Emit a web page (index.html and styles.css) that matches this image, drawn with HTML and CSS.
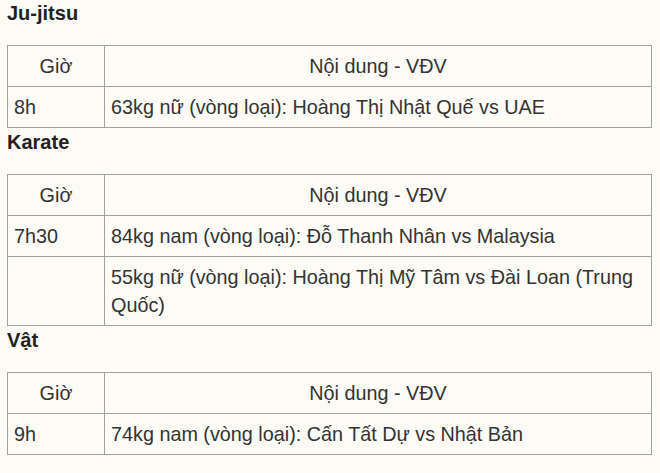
FILE: index.html
```html
<!DOCTYPE html>
<html lang="vi">
<head>
<meta charset="utf-8">
<link rel="stylesheet" href="styles.css">
</head>
<body>
<div class="page">
  <p class="sport">Ju-jitsu</p>
  <table class="sched">
    <tr><td class="c1 hd">Giờ</td><td class="c2 hd">Nội dung - VĐV</td></tr>
    <tr><td class="c1">8h</td><td class="c2">63kg nữ (vòng loại): Hoàng Thị Nhật Quế vs UAE</td></tr>
  </table>
  <p class="sport">Karate</p>
  <table class="sched">
    <tr><td class="c1 hd">Giờ</td><td class="c2 hd">Nội dung - VĐV</td></tr>
    <tr><td class="c1">7h30</td><td class="c2">84kg nam (vòng loại): Đỗ Thanh Nhân vs Malaysia</td></tr>
    <tr><td class="c1"></td><td class="c2">55kg nữ (vòng loại): Hoàng Thị Mỹ Tâm vs Đài Loan (Trung Quốc)</td></tr>
  </table>
  <p class="sport">Vật</p>
  <table class="sched">
    <tr><td class="c1 hd">Giờ</td><td class="c2 hd">Nội dung - VĐV</td></tr>
    <tr><td class="c1">9h</td><td class="c2">74kg nam (vòng loại): Cấn Tất Dự vs Nhật Bản</td></tr>
  </table>
</div>
</body>
</html>
```
FILE: styles.css
```css
html, body {
  margin: 0;
  padding: 0;
  background: #fcfbf6;
}
body {
  font-family: "Liberation Sans", Arial, sans-serif;
  color: #333;
  font-size: 19.8px;
}
.page {
  padding: 0 8px 0 7px;
}
.sport {
  font-weight: bold;
  font-size: 20px;
  line-height: 26px;
  margin: 1px 0 19px;
  color: #222;
}
.sport:first-child {
  margin-top: 0;
}
.sched {
  width: 100%;
  border-collapse: collapse;
  table-layout: fixed;
}
.sched td {
  border: 1px solid #a0a0a0;
  padding: 6px 6px;
  line-height: 28px;
  vertical-align: top;
}
.sched .c1 {
  width: 84px;
}
.sched .hd {
  text-align: center;
}
```
